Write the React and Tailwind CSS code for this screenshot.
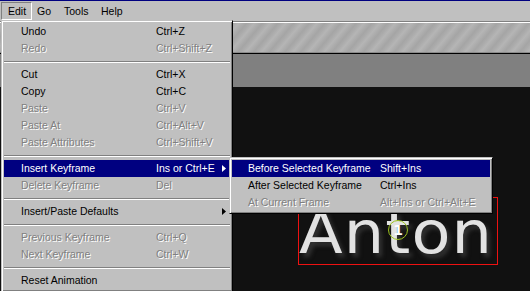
import React from "react";

const Arrow = ({ white }) => (
  <svg width="4" height="7" viewBox="0 0 4 7" className="block">
    <path d="M0 0 L4 3.5 L0 7 Z" fill={white ? "#ffffff" : "#000000"} />
  </svg>
);

const Sep = () => (
  <div className="h-[9px] flex flex-col justify-start px-0">
    <div className="mt-[4px] h-[1px] bg-[#808080]" />
    <div className="h-[1px] bg-white" />
  </div>
);

function Item({ label, shortcut, disabled, active, arrow, labelW = "w-[135px]", pl = "pl-[17px]" }) {
  const base = active
    ? "bg-[#000080] text-white"
    : disabled
    ? "text-[#808080] [text-shadow:1px_1px_0_#ffffff]"
    : "text-black";
  return (
    <div className={`flex h-[17px] items-center ${pl} ${base}`}>
      <div className={`${labelW} shrink-0 whitespace-nowrap`}>{label}</div>
      <div className="flex-1 whitespace-nowrap">{shortcut}</div>
      {arrow && (
        <div className="mr-[4px] flex items-center">
          <Arrow white={active} />
        </div>
      )}
    </div>
  );
}

export default function App() {
  return (
    <div className="relative h-[291px] w-[530px] overflow-hidden bg-[#111111] font-['Liberation_Sans',Arial,sans-serif] text-[10.5px] leading-none">
      {/* title bar remnant */}
      <div className="h-[1px] bg-[#000080]" />
      {/* menubar */}
      <div className="flex h-[20px] items-center bg-[#c0c0c0] pl-[1px] text-black">
        <div className="flex h-[18px] w-[31px] items-center border border-t-[#808080] border-l-[#808080] border-r-white border-b-white pl-[6px]">
          Edit
        </div>
        <div className="w-[27px] pl-[5px]">Go</div>
        <div className="w-[37px] pl-[5px]">Tools</div>
        <div className="pl-[5px]">Help</div>
      </div>
      {/* toolbar strip */}
      <div className="h-[1px] bg-[#808080]" />
      <div className="h-[1px] bg-white" />
      <div className="h-[29px] bg-[repeating-linear-gradient(130deg,#acacac_0px,#b5b5b5_3px,#adadad_6px,#a5a5a5_9px,#acacac_12px)]" />
      <div className="h-[1px] bg-[#8a8a8a]" />
      <div className="h-[1px] bg-black" />
      <div className="h-[33px] bg-[#808080]" />
      {/* canvas */}
      <div className="relative h-[204px] bg-[#111111]">
        <div className="absolute left-[298px] top-[110px] h-[68px] w-[200px] border border-[#ee1111]" />
        <div className="absolute left-[299px] top-[117px] origin-left scale-x-[1.1] whitespace-nowrap font-['DejaVu_Sans',sans-serif] text-[58px] leading-none tracking-[1px] text-[#e2e2e2] blur-[0.5px] [text-shadow:3px_4px_4px_#333333]">
          Anton
        </div>
        <div className="absolute left-[388px] top-[133px] flex h-[20px] w-[20px] items-center justify-center rounded-full border border-[#9cc21e] font-['DejaVu_Sans',sans-serif] text-[14px] font-bold text-white">
          1
        </div>
      </div>

      {/* Edit menu */}
      <div className="absolute left-[1px] top-[20px] w-[232px] border border-t-[#c0c0c0] border-l-[#c0c0c0] border-r-black border-b-black bg-[#c0c0c0] p-[2px] shadow-[inset_1px_1px_0_#ffffff,inset_-1px_-1px_0_#808080]">
        <Item label="Undo" shortcut="Ctrl+Z" />
        <Item label="Redo" shortcut="Ctrl+Shift+Z" disabled />
        <Sep />
        <Item label="Cut" shortcut="Ctrl+X" />
        <Item label="Copy" shortcut="Ctrl+C" />
        <Item label="Paste" shortcut="Ctrl+V" disabled />
        <Item label="Paste At" shortcut="Ctrl+Alt+V" disabled />
        <Item label="Paste Attributes" shortcut="Ctrl+Shift+V" disabled />
        <Sep />
        <Item label="Insert Keyframe" shortcut="Ins or Ctrl+E" active arrow />
        <Item label="Delete Keyframe" shortcut="Del" disabled />
        <Sep />
        <Item label="Insert/Paste Defaults" arrow />
        <Sep />
        <Item label="Previous Keyframe" shortcut="Ctrl+Q" disabled />
        <Item label="Next Keyframe" shortcut="Ctrl+W" disabled />
        <Sep />
        <Item label="Reset Animation" />
      </div>

      {/* Submenu */}
      <div className="absolute left-[229px] top-[157px] w-[264px] border border-t-[#c0c0c0] border-l-[#c0c0c0] border-r-black border-b-black bg-[#c0c0c0] p-[2px] shadow-[inset_1px_1px_0_#ffffff,inset_-1px_-1px_0_#808080]">
        <Item label="Before Selected Keyframe" shortcut="Shift+Ins" active labelW="w-[132px]" pl="pl-[16px]" />
        <Item label="After Selected Keyframe" shortcut="Ctrl+Ins" labelW="w-[132px]" pl="pl-[16px]" />
        <Item label="At Current Frame" shortcut="Alt+Ins or Ctrl+Alt+E" disabled labelW="w-[132px]" pl="pl-[16px]" />
      </div>
    </div>
  );
}
